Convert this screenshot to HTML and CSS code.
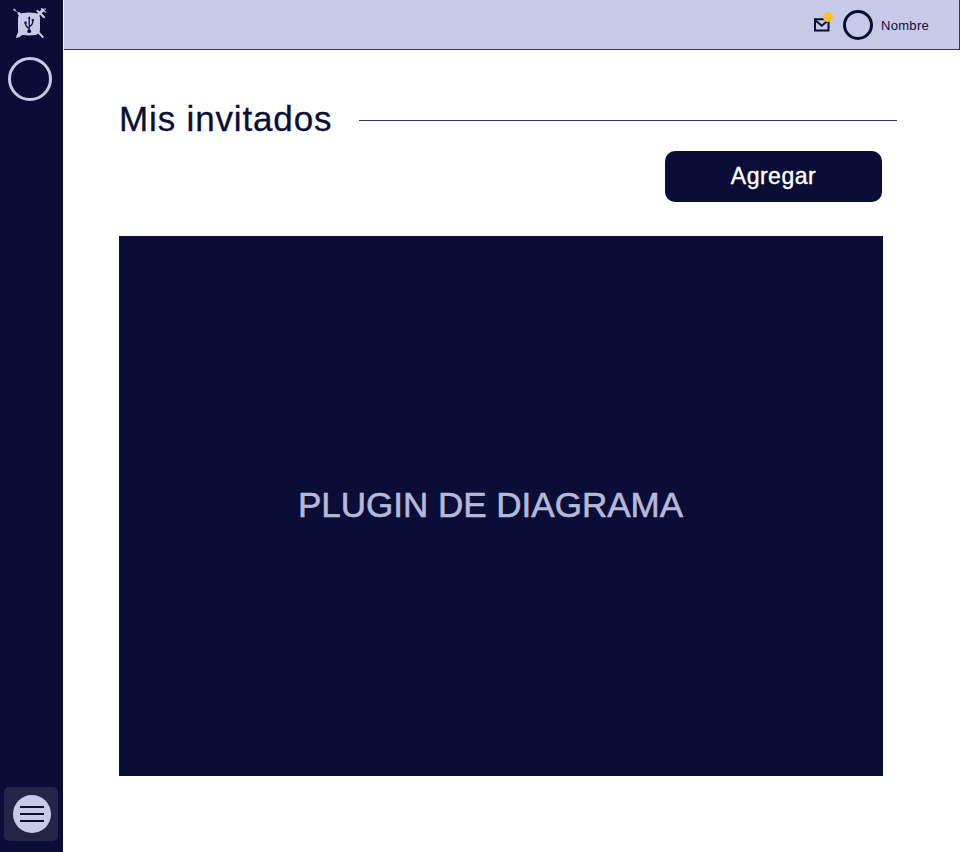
FILE: index.html
```
<!DOCTYPE html>
<html lang="es">
<head>
<meta charset="utf-8">
<title>Mis invitados</title>
<link rel="stylesheet" href="styles.css">
</head>
<body>
<div class="app">
  <aside class="sidebar">
    <svg class="logo" viewBox="0 0 36 34" width="36" height="34" aria-hidden="true">
      <g stroke="#c6cae8" fill="none" stroke-linecap="round">
        <path d="M2 3.500l1.200 1" stroke-width="1.800" opacity=".8"/>
        <path d="M4 5l4 3.500" stroke-width="1" opacity=".6"/>
        <path d="M7 7.500l2.500 2.500" stroke-width="3"/>
        <path d="M24.500 10.500l6.500-6.500" stroke-width="2.800"/>
        <path d="M25.500 5l6.500 6" stroke-width="2.200"/>
        <path d="M29.500 2.800l3.700 3.200M33 3h.2" stroke-width="1.500"/>
        <path d="M26 26l4.800 5" stroke-width="1.900"/>
      </g>
      <path fill="#c6cae8" d="M6.500 25l4.500 3.500-3.500 2.500-3 1q-.7-.3-.3-1.200z"/>
      <path fill="#c6cae8" d="M11 7q6-.8 12 0 4.500.5 5 5v12q-.5 4.500-5 5-6 .8-12 0-4.500-.5-5-5v-12q.5-4.500 5-5z"/>
      <g stroke="#0a0d35" stroke-width="1.300" fill="none">
        <path d="M17.200 11.500V25M17.200 22.500q-3.700-1.500-3.700-5.500M17.200 20.500q3.600-1 3.600-6"/>
      </g>
      <path fill="#0a0d35" d="M17.200 10l1.400 2.800h-2.800zM12.400 15.500h2.200v2.200h-2.200zM19.700 13h2.200v2.200h-2.200z"/>
      <circle cx="17.200" cy="25.200" r="1.900" fill="#0a0d35"/>
    </svg>
    <div class="avatar avatar-side"></div>
    <button class="menu" aria-label="Menú">
      <span class="menu-disc"><i></i><i></i><i></i></span>
    </button>
  </aside>
  <div class="page">
    <header class="topbar">
      <div class="mail">
        <svg viewBox="0 0 16 14" width="16" height="14" aria-hidden="true">
          <path d="M1 1.200h13.500v11.300H1z" fill="none" stroke="#0a0d35" stroke-width="2"/>
          <path d="M1.500 2.500l6.300 5.300 6.200-5.300" fill="none" stroke="#0a0d35" stroke-width="2"/>
        </svg>
        <span class="badge"></span>
      </div>
      <div class="avatar avatar-user"></div>
      <span class="name">Nombre</span>
    </header>
    <main class="content">
      <div class="heading">
        <h1>Mis invitados</h1>
        <span class="rule"></span>
      </div>
      <button class="add">Agregar</button>
      <section class="diagram"><span>PLUGIN DE DIAGRAMA</span></section>
    </main>
  </div>
</div>
</body>
</html>
```
FILE: styles.css
```
* { box-sizing: border-box; }
body {
  margin: 0;
  background: #fff;
  color: #0a0d35;
  font-family: "Liberation Sans", Arial, sans-serif;
}
button { border: 0; padding: 0; font: inherit; }
.app { display: flex; height: 852px; overflow: hidden; }
.sidebar {
  display: flex;
  flex-direction: column;
  width: 63px;
  padding: 6px 4px 11px;
  background: #0a0d35;
}
.logo { margin-left: 8px; }
.avatar { border-radius: 50%; flex: none; }
.avatar-side {
  width: 44px;
  height: 44px;
  margin: 17px 0 0 4px;
  border: 3px solid #c6cae8;
}
.menu {
  display: grid;
  place-items: center;
  width: 54px;
  height: 54px;
  margin-top: auto;
  border-radius: 5px;
  background: #232548;
}
.menu-disc {
  display: flex;
  flex-direction: column;
  align-items: center;
  justify-content: center;
  gap: 5px;
  width: 38px;
  height: 38px;
  margin-left: 1px;
  border-radius: 50%;
  background: #c6cae8;
}
.menu-disc i { width: 24px; height: 2px; background: #0a0d35; }
.page { flex: 1; padding-left: 1px; min-width: 0; }
.topbar {
  display: flex;
  align-items: center;
  height: 50px;
  padding-right: 30px;
  justify-content: flex-end;
  background: #c6cae8;
  border-right: 1px solid #34376a;
  border-bottom: 1px solid #34376a;
}
.mail { position: relative; height: 14px; margin: 1px 13px 0 0; }
.mail svg { display: block; }
.badge {
  position: absolute;
  top: -6px;
  right: -3px;
  width: 10px;
  height: 10px;
  border-radius: 50%;
  background: #fcc02c;
}
.avatar-user {
  width: 30px;
  height: 30px;
  margin-top: 1px;
  border: 3px solid #0a0d35;
}
.name {
  width: 48px;
  margin: 1px 0 0 8px;
  font-size: 13px;
  letter-spacing: .3px;
  white-space: nowrap;
}
.content { display: flex; flex-direction: column; padding: 49px 63px 0 55px; }
.heading { display: flex; align-items: center; height: 42px; }
h1 {
  width: 240px;
  margin: 0;
  padding-bottom: 2px;
  font-size: 35px;
  font-weight: 400;
  line-height: 40px;
  letter-spacing: .85px;
  white-space: nowrap;
  -webkit-text-stroke: .3px #0a0d35;
}
.rule { flex: 1; height: 1px; background: #34376a; }
.add {
  align-self: flex-end;
  width: 217px;
  height: 51px;
  margin: 10px 15px 0 0;
  border-radius: 10px;
  background: #0a0d35;
  color: #fff;
  font-size: 23px;
  letter-spacing: .5px;
  -webkit-text-stroke: .4px #fff;
}
.diagram {
  display: grid;
  place-items: center;
  width: 764px;
  height: 540px;
  margin-top: 34px;
  padding: 0 21px 2px 0;
  background: #0a0d35;
  color: #b5b9d9;
  font-size: 35px;
  -webkit-text-stroke: .6px #b5b9d9;
}
```
